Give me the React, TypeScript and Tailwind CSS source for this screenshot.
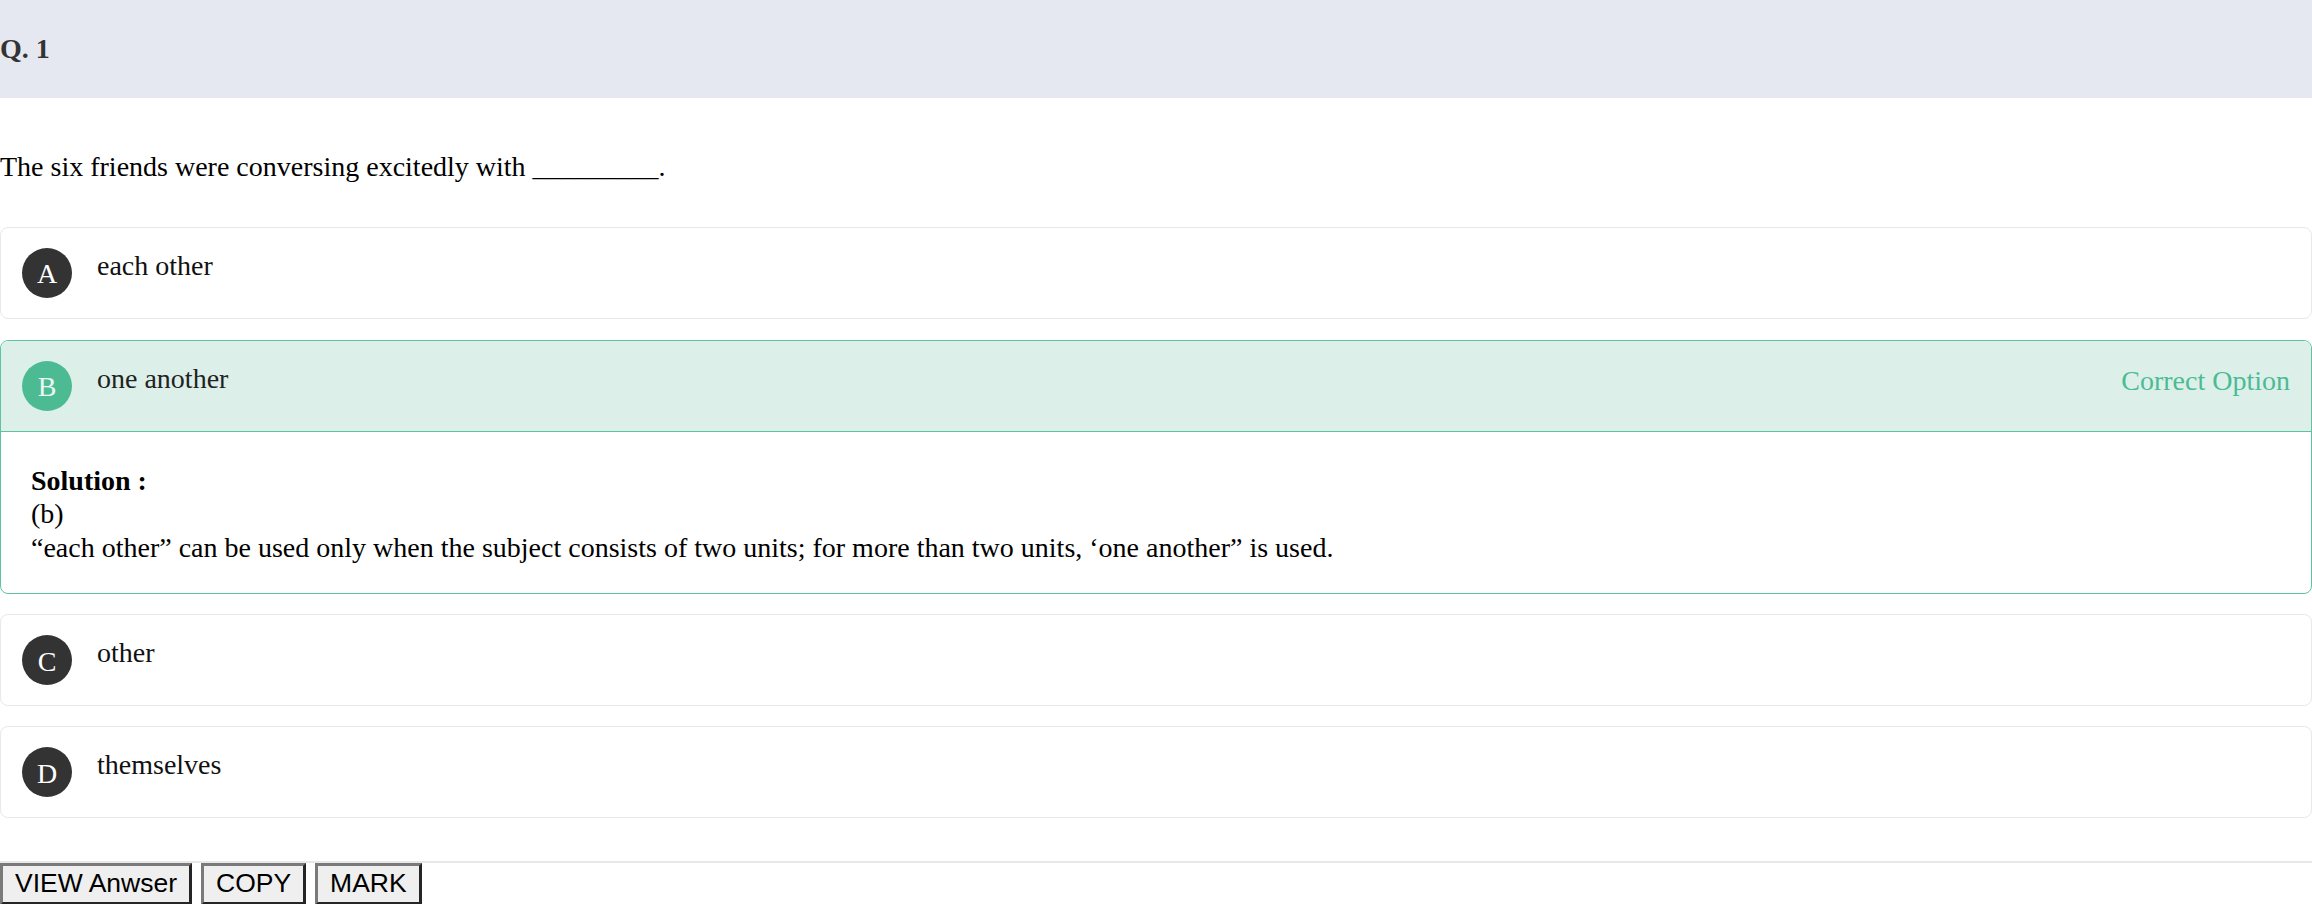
import React from 'react';

const options = [
  { key: 'A', text: 'each other' },
  { key: 'B', text: 'one another', correct: true },
  { key: 'C', text: 'other' },
  { key: 'D', text: 'themselves' },
];

const Solution = () => (
  <div className="px-[30px] pt-[32px] pb-[29px] leading-[1.2]">
    <div className="font-bold">Solution :</div>
    <div>(b)</div>
    <div>
      “each other” can be used only when the subject consists of two units; for more than two units, ‘one another” is used.
    </div>
  </div>
);

const App = () => {
  return (
    <div className="min-h-screen bg-white text-[28px] text-black font-['Liberation_Serif',serif]">
      <div className="h-[98px] flex items-center bg-[#e5e8f0]">
        <h2 className="font-bold text-[#333333]">Q. 1</h2>
      </div>

      <p className="mt-[52px] mb-[43px] leading-[1.2]">
        The six friends were conversing excitedly with _________.
      </p>

      <div className="flex flex-col gap-[20px]">
        {options.map((opt) =>
          opt.correct ? (
            <div key={opt.key} className="mt-[1px] border border-[#5ec4a0] rounded-[8px] overflow-hidden">
              <div className="flex items-start gap-[25px] bg-[#dcf0e9] border-b border-[#5ec4a0] pl-[21px] pr-[21px] py-[20px]">
                <div className="w-[50px] h-[50px] shrink-0 rounded-full bg-[#4cbb94] text-[#e8f7f1] text-[28px] pt-[3px] flex items-center justify-center">
                  {opt.key}
                </div>
                <div className="flex-1 leading-[1.2] pt-[1px] text-[#222222]">{opt.text}</div>
                <div className="leading-[1.2] pt-[3px] text-[#4cbb94]">Correct Option</div>
              </div>
              <Solution />
            </div>
          ) : (
            <div key={opt.key} className="flex items-start gap-[25px] border border-[#e8e8e8] rounded-[8px] pl-[21px] pr-[21px] py-[20px]">
              <div className="w-[50px] h-[50px] shrink-0 rounded-full bg-[#333333] text-white text-[28px] pt-[3px] flex items-center justify-center">
                {opt.key}
              </div>
              <div className="leading-[1.2] pt-[1px] text-[#111111]">{opt.text}</div>
            </div>
          )
        )}
      </div>

      <hr className="mt-[43px] border-t-2 border-[#e8e8e8]" />

      <div className="flex gap-[9px] font-['Liberation_Sans',Arial,sans-serif]">
        {['VIEW Anwser', 'COPY', 'MARK'].map((b) => (
          <button
            key={b}
            className="bg-[#efefef] text-black text-[26.5px] leading-[1.2] px-[12px] py-[2px] border-[3px] border-[#7a7a7a] [border-style:outset]"
          >
            {b}
          </button>
        ))}
      </div>
    </div>
  );
};

export default App;
